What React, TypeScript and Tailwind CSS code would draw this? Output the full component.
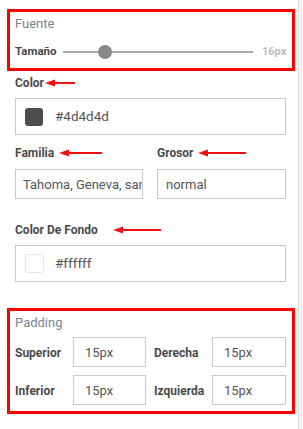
import React from "react";

const Arrow = ({ w, className = "" }: { w: number; className?: string }) => (
  <svg width={w} height={8} viewBox={`0 0 ${w} 8`} className={className}>
    <polygon points={`0,4 10,0.5 10,7.5`} fill="#e11" />
    <rect x={8} y={3} width={w - 8} height={2} fill="#e11" />
  </svg>
);

const Label = ({ children }: { children: React.ReactNode }) => (
  <span className="text-[12px] font-bold text-[#4a4a4a] leading-[16px] whitespace-nowrap">{children}</span>
);

const TextBox = ({ value, w, pl = "pl-[11px]" }: { value: string; w: string; pl?: string }) => (
  <input
    readOnly
    value={value}
    className={`${w} h-[30px] border border-[#c9c9c9] bg-white text-[13px] text-[#555] outline-none ${pl} pr-0`}
    style={{ fontFamily: "Roboto, 'Liberation Sans', sans-serif" }}
  />
);

export default function App() {
  return (
    <div
      className="w-[303px] h-[429px] flex bg-white overflow-hidden"
      style={{ fontFamily: "Roboto, 'Liberation Sans', sans-serif" }}
    >
      <div className="w-[299px] border-r border-[#dcdcdc] flex flex-col">
        {/* Fuente box */}
        <div className="ml-[7px] mt-[9px] w-[288px] h-[62px] border-[3px] border-[#f00] px-[5px] pt-[4px] flex flex-col">
          <span className="text-[13px] leading-[16px] text-[#7a8491]">Fuente</span>
          <div className="mt-[10px] h-[20px] flex items-center">
            <span className="w-[42px] text-[11.5px] font-bold text-[#4a4a4a] whitespace-nowrap">Tamaño</span>
            <div className="ml-[6px] w-[190px] h-[2px] bg-[#aaa] relative">
              <div className="absolute left-[35px] top-[-6px] w-[14px] h-[14px] rounded-full bg-[#888]" />
            </div>
            <span className="ml-[9px] text-[11px] font-bold text-[#bbb]">16px</span>
          </div>
        </div>

        {/* Color */}
        <div className="ml-[15px] mt-[4px] h-[16px] flex items-center">
          <Label>Color</Label>
          <Arrow w={30} className="ml-[1px]" />
        </div>
        <div className="ml-[15px] mt-[7px] w-[271px] h-[37px] border border-[#c9c9c9] flex items-center pl-[9px]">
          <div className="w-[18px] h-[18px] rounded-[3px] bg-[#4d4d4d]" />
          <span className="ml-[12px] text-[13.5px] text-[#555]">#4d4d4d</span>
        </div>

        {/* Familia / Grosor */}
        <div className="ml-[15px] mt-[10px] flex">
          <div className="w-[142px] flex flex-col">
            <div className="h-[16px] flex items-center">
              <Label>Familia</Label>
              <Arrow w={43} className="ml-[5px]" />
            </div>
            <div className="mt-[8px] flex">
              <TextBox value="Tahoma, Geneva, sans-serif" w="w-[128px]" pl="pl-[7px]" />
            </div>
          </div>
          <div className="flex flex-col">
            <div className="h-[16px] flex items-center">
              <Label>Grosor</Label>
              <Arrow w={48} className="ml-[4px]" />
            </div>
            <div className="mt-[8px] flex">
              <TextBox value="normal" w="w-[129px]" pl="pl-[8px]" />
            </div>
          </div>
        </div>

        {/* Color de fondo */}
        <div className="ml-[15px] mt-[23px] h-[16px] flex items-center">
          <Label>Color De Fondo</Label>
          <Arrow w={48} className="ml-[15px]" />
        </div>
        <div className="ml-[15px] mt-[7px] w-[271px] h-[37px] border border-[#c9c9c9] flex items-center pl-[9px]">
          <div className="w-[19px] h-[19px] rounded-[3px] bg-white border border-[#e6e6e6]" />
          <span className="ml-[11px] text-[13.5px] text-[#555]">#ffffff</span>
        </div>

        {/* Padding box */}
        <div className="ml-[7px] mt-[26px] w-[288px] h-[106px] border-[3px] border-[#f00] px-[5px] pt-[4px] flex flex-col">
          <span className="text-[13px] leading-[16px] text-[#7a8491]">Padding</span>
          <div className="mt-[6px] flex items-center">
            <div className="w-[58px]"><Label>Superior</Label></div>
            <TextBox value="15px" w="w-[73px]" />
            <div className="ml-[8px] w-[58px]"><Label>Derecha</Label></div>
            <TextBox value="15px" w="w-[74px]" />
          </div>
          <div className="mt-[8px] flex items-center">
            <div className="w-[58px]"><Label>Inferior</Label></div>
            <TextBox value="15px" w="w-[73px]" />
            <div className="ml-[8px] w-[58px]"><Label>Izquierda</Label></div>
            <TextBox value="15px" w="w-[74px]" />
          </div>
        </div>
      </div>
      <div className="flex-1 bg-[#f1f1f1]" />
    </div>
  );
}
